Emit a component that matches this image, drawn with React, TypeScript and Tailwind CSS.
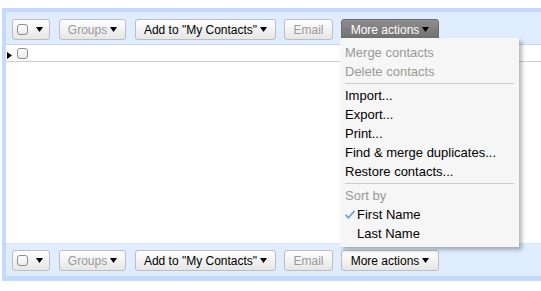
import React from 'react';

function Arrow({ className = '' }: { className?: string }) {
  return (
    <svg width="7" height="5" viewBox="0 0 7 5" className={className}>
      <path d="M0 0 L7 0 L3.5 5 Z" fill="#000" />
    </svg>
  );
}

function Checkbox() {
  return (
    <span className="inline-block w-[11px] h-[11px] rounded-[3px] border border-[#8d8d8d] bg-gradient-to-b from-white to-[#ececec]" />
  );
}

function Btn({
  width,
  children,
  disabled,
  active,
  className = '',
}: {
  width: string;
  children: React.ReactNode;
  disabled?: boolean;
  active?: boolean;
  className?: string;
}) {
  const look = active
    ? 'border-[#6a6a6a] bg-gradient-to-b from-[#8e8e8e] to-[#6f6f6f] text-white rounded-b-none'
    : 'border-[#bdbdbd] bg-gradient-to-b from-white to-[#e6e6e6] ' + (disabled ? 'text-[#999]' : 'text-black');
  return (
    <div
      className={`${width} h-[21px] shrink-0 flex items-center justify-center gap-[3px] rounded-[3px] border text-[12px] ${look} ${className}`}
    >
      {children}
    </div>
  );
}

function MenuItem({ children, disabled, checked, indent }: { children: React.ReactNode; disabled?: boolean; checked?: boolean; indent?: boolean }) {
  return (
    <div className={`h-[19px] flex items-center pl-[5px] ${disabled ? 'text-[#999]' : 'text-black'}`}>
      {indent && (
        <span className="w-[12px] flex items-center">
          {checked && (
            <svg width="10" height="9" viewBox="0 0 10 9">
              <path d="M0.5 4.8 L3.4 7.8 L9.5 0.8" stroke="#6d9ef0" strokeWidth="1.8" fill="none" />
            </svg>
          )}
        </span>
      )}
      {children}
    </div>
  );
}

function Sep() {
  return <div className="mx-[5px] my-[2px] border-t border-[#cccccc]" />;
}

function Menu() {
  return (
    <div className="absolute left-[-1px] top-[19px] w-[179px] bg-[#f6f6f6] pt-[5px] pb-[4px] text-[13px] shadow-[3px_3px_4px_rgba(0,0,0,0.28)] z-10 text-left">
      <MenuItem disabled>Merge contacts</MenuItem>
      <MenuItem disabled>Delete contacts</MenuItem>
      <Sep />
      <MenuItem>Import...</MenuItem>
      <MenuItem>Export...</MenuItem>
      <MenuItem>Print...</MenuItem>
      <MenuItem>Find &amp; merge duplicates...</MenuItem>
      <MenuItem>Restore contacts...</MenuItem>
      <Sep />
      <MenuItem disabled>Sort by</MenuItem>
      <MenuItem indent checked>First Name</MenuItem>
      <MenuItem indent>Last Name</MenuItem>
    </div>
  );
}

function Toolbar({ top }: { top?: boolean }) {
  return (
    <div
      className={`h-[33px] shrink-0 bg-[#e0ecff] flex items-start pl-[6px] ${
        top ? 'pt-[7px] border-b border-[#c9d6ee]' : 'pt-[6px] border-t border-[#dde6f6]'
      }`}
    >
      <Btn width="w-[38px]" className="justify-start pl-[4px] gap-[8px]">
        <Checkbox />
        <Arrow />
      </Btn>
      <Btn width="w-[67px]" disabled className="ml-[9px]">
        Groups
        <Arrow />
      </Btn>
      <Btn width="w-[141px]" className="ml-[9px]">
        Add to "My Contacts"
        <Arrow />
      </Btn>
      <Btn width="w-[49px]" disabled className="ml-[8px]">
        Email
      </Btn>
      <div className="relative ml-[8px]">
        <Btn width="w-[98px]" active={top}>
          More actions
          <Arrow />
        </Btn>
        {top && <Menu />}
      </div>
    </div>
  );
}

export default function App() {
  return (
    <div className="w-[541px] h-[291px] bg-white pt-2 overflow-hidden font-['Liberation_Sans',Arial,sans-serif]">
      <div className="ml-[2px] h-[273px] flex flex-col border-l-4 border-t-4 border-b-[5px] border-[#c3d9ff]">
        <Toolbar top />
        <div className="flex-1 bg-white">
          <div className="h-[17px] flex items-center border-b border-[#cccccc]">
            <svg width="5" height="7" viewBox="0 0 5 7" className="ml-[1px] mt-[4px]">
              <path d="M0 0 L5 3.5 L0 7 Z" fill="#000" />
            </svg>
            <span className="ml-[5px] flex">
              <Checkbox />
            </span>
          </div>
        </div>
        <Toolbar />
      </div>
    </div>
  );
}
